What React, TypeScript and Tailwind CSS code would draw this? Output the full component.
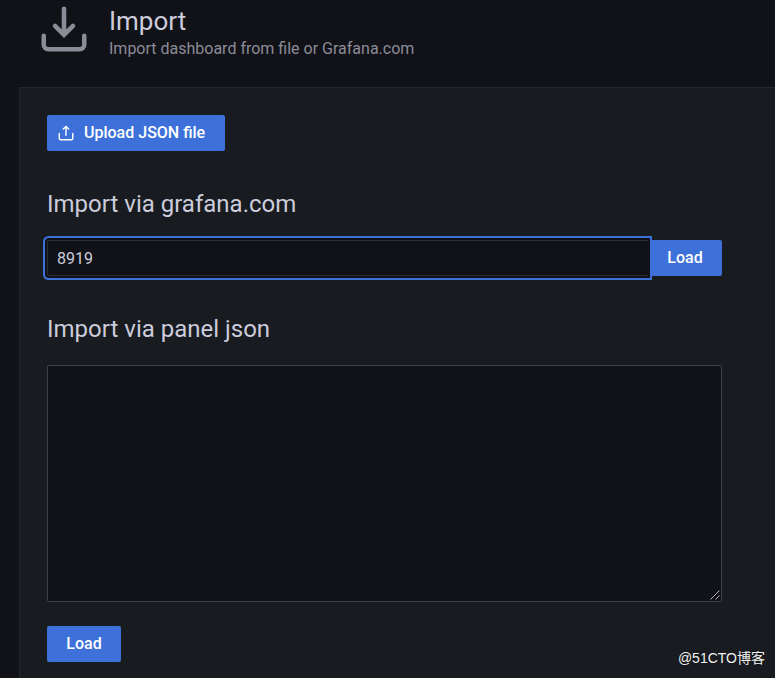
import { useState } from "react";

function ImportIcon() {
  return (
    <svg
      className="size-[54px] shrink-0 text-[#8c8b98]"
      viewBox="0 0 24 24"
      fill="none"
      stroke="currentColor"
      strokeWidth="2"
      strokeLinecap="round"
      aria-hidden="true"
    >
      <path d="M12 3v11M8 10.600l4 4 4-4" />
      <path d="M3 15v4a2 2 0 0 0 2 2h14a2 2 0 0 0 2-2v-4" />
    </svg>
  );
}

function UploadIcon() {
  return (
    <svg
      className="size-[18px] shrink-0"
      viewBox="0 0 24 24"
      fill="none"
      stroke="currentColor"
      strokeWidth="1.9"
      strokeLinecap="round"
      aria-hidden="true"
    >
      <path d="M12 15V4M8.400 6.800 12 3.300l3.600 3.500" />
      <path d="M3 12.500V19a2 2 0 0 0 2 2h14a2 2 0 0 0 2-2v-6.500" />
    </svg>
  );
}

export default function App() {
  const [dashboardId, setDashboardId] = useState("8919");
  const [json, setJson] = useState("");

  return (
    <div className="relative flex flex-col min-h-screen bg-[#111217] text-[#ccccdc] font-[Roboto,sans-serif]">
      <header className="flex gap-[18px] pt-0.5 pl-[37px] pb-[26px]">
        <ImportIcon />
        <div className="pt-[3px]">
          <h1 className="text-[26px] leading-8">Import</h1>
          <p className="text-base leading-6 text-[#8c8b98]">
            Import dashboard from file or Grafana.com
          </p>
        </div>
      </header>

      <main className="grow ml-[19px] border-t border-l border-[#25272c] bg-[#181b1f] pt-[27px] pr-[53px] pb-4 pl-[27px]">
        <button
          type="button"
          className="flex items-center gap-[9px] h-9 pl-2.5 pr-5 rounded-xs bg-[#3d71d9] text-base font-medium text-white"
        >
          <UploadIcon />
          Upload JSON file
        </button>

        <form className="mt-[37px]" onSubmit={(e) => e.preventDefault()}>
          <label htmlFor="dashboardId" className="block text-2xl leading-8">
            Import via grafana.com
          </label>
          <div className="flex mt-5">
            <input
              id="dashboardId"
              type="text"
              className="relative z-10 grow min-w-0 h-9 px-[9px] rounded-l-xs border border-r-0 border-[#2c2e33] bg-[#111217] text-base outline-none ring-2 ring-[#3d71d9] ring-offset-2 ring-offset-[#111217]"
              value={dashboardId}
              onChange={(e) => setDashboardId(e.currentTarget.value)}
            />
            <button
              type="submit"
              className="h-9 w-[74px] rounded-r-xs bg-[#3d71d9] text-base font-medium text-white"
            >
              Load
            </button>
          </div>
        </form>

        <form className="mt-[37px]" onSubmit={(e) => e.preventDefault()}>
          <label htmlFor="panelJson" className="block text-2xl leading-8">
            Import via panel json
          </label>
          <div className="relative mt-5">
            <textarea
              id="panelJson"
              className="block w-full h-[237px] px-2 py-1 rounded-xs border border-[#404148] bg-[#111217] text-base outline-none resize-none"
              value={json}
              onChange={(e) => setJson(e.currentTarget.value)}
            />
            <svg
              className="absolute right-0.5 bottom-0.5 size-2.5 text-[#b4b4b8] pointer-events-none"
              viewBox="0 0 10 10"
              stroke="currentColor"
              aria-hidden="true"
            >
              <path d="M0.500 9.500l9-9M5.500 9.500l4-4" />
            </svg>
          </div>
          <button
            type="submit"
            className="h-9 w-[74px] mt-6 rounded-xs bg-[#3d71d9] text-base font-medium text-white"
          >
            Load
          </button>
        </form>
      </main>

      <span className="absolute right-2.5 bottom-2.5 text-sm leading-5 text-[#f2f2f2] font-['Liberation_Sans','Noto_Sans_CJK_SC',sans-serif] text-shadow-xs">
        @51CTO博客
      </span>
    </div>
  );
}
